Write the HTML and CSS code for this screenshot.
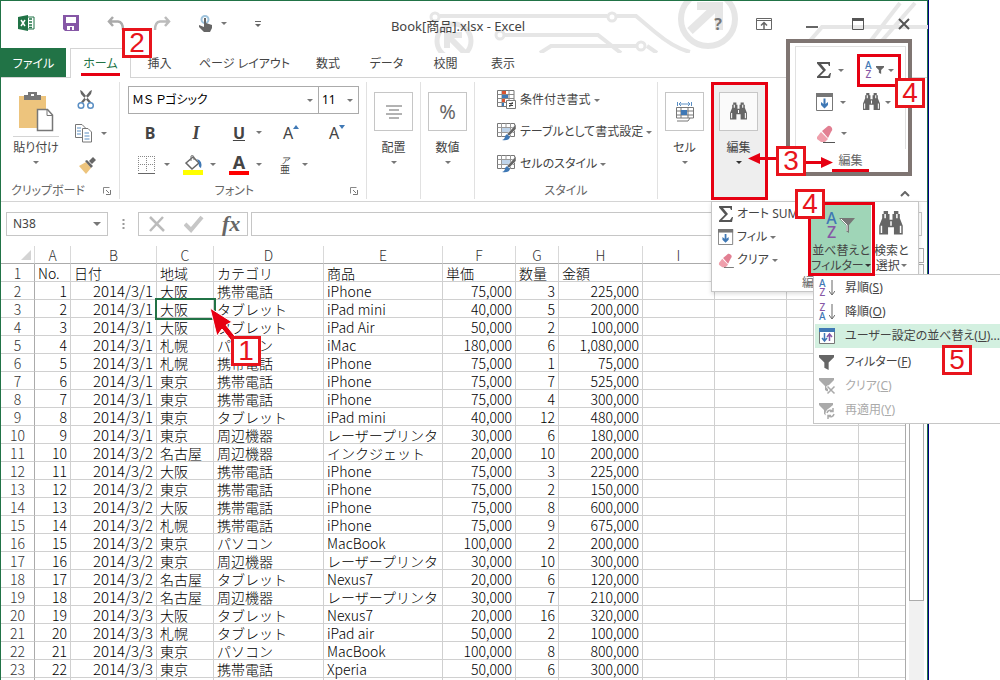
FILE: index.html
```html
<!DOCTYPE html>
<html lang="ja">
<head>
<meta charset="utf-8">
<title>Book[商品].xlsx - Excel</title>
<link rel="stylesheet" href="styles.css">
</head>
<body>
<svg class="defs" aria-hidden="true">
  <symbol id="sigma" viewBox="0 0 16 16"><path d="M1 0H14V4H13L12 2H5L10 8L4 14H12L14 11H15L14 16H1V14.500L7 8.500L1 1.500Z" fill="#555"/></symbol>
  <symbol id="fill" viewBox="0 0 18 18"><path d="M.5.5H16.500V17.500H.5Z" fill="#fff" stroke="#777"/><path d="M0 0H17V4H0Z" fill="#777"/><path d="M7.500 5.500H9.500V11L12 9V12L8.500 15.500L5 12V9L7.500 11Z" fill="#3f78b5"/></symbol>
  <symbol id="binoc" viewBox="0 0 18 17"><path d="M4 0H7V2H8V6H10V2H11V0H14V2H15V5L17 10V16H11V11H7V16H1V10L3 5V2H4Z" fill="#666"/><path d="M2.500 10V15M15.500 10V15M5 2V5M13 2V5M9 7V10" stroke="#fff" stroke-width="1"/></symbol>
  <symbol id="eraser" viewBox="0 0 19 18"><path d="M1 12L5 7L12 14L9 17H5L1 14Z" fill="#ef9fac"/><path d="M6 6L12 1Q14 0 16 3Q17 5 15 7L12 13Z" fill="#e27f92"/><path d="M7 17.500H19" stroke="#555"/></symbol>
  <symbol id="scissors" viewBox="0 0 18 20"><path d="M3 0L4 4L12 13L14 12L5 1ZM15 0L14 4L6 13L4 12L13 1Z" fill="#666"/><circle cx="4" cy="15.500" r="2.800" fill="none" stroke="#5b8fc4" stroke-width="1.500"/><circle cx="13.500" cy="15.500" r="2.800" fill="none" stroke="#5b8fc4" stroke-width="1.500"/></symbol>
  <symbol id="funnel" viewBox="0 0 14 14"><path d="M0 0H14V2L9 7V14L5 12V7L0 2Z" fill="currentColor"/></symbol>
  <symbol id="tablebrush" viewBox="0 0 20 20"><path d="M.5 1.500H17.500V14.500H.5Z" fill="#fff" stroke="#777"/><path d="M5 5.500H13V11H5Z" fill="#bfd4ea"/><path d="M.5 5.500H17.500M.5 10.500H17.500M4.500 1V15M9 1V5M13.500 1V15" stroke="#999"/><path d="M19 2L19 7L12 14L10 12Z" fill="#666" stroke="#fff" stroke-width=".5"/><path d="M10 12L13 15Q12 19 5 18Q8 17 8 14Z" fill="#3f78b5"/></symbol>
  <symbol id="launcher" viewBox="0 0 8 8"><path d="M.5 6.500V.5H6.500" fill="none" stroke="#888"/><path d="M3 3L6 6M7.500 3V7.500H3" fill="none" stroke="#777"/></symbol>
</svg>
<div class="screen">
<main class="app">
  <header class="titlebar">
    <svg class="circuit" width="500" height="52" viewBox="0 0 500 52" fill="none" stroke="#e6e6e6" stroke-width="4">
      <circle cx="7" cy="16" r="4" stroke-width="3"/><path d="M12 15H179M189 15H208L227 31Q246 47 262 51"/><circle cx="184" cy="16" r="4" stroke-width="3"/>
      <circle cx="26" cy="40" r="17" stroke-width="5"/><path d="M36 51L21 36M19 47V34H34" stroke-width="6"/>
      <circle cx="72" cy="34" r="4" stroke-width="3"/><path d="M77 34H170L193 52M112 52L123 45H208M219 45L229 52"/><circle cx="213" cy="45" r="4" stroke-width="3"/>
      <circle cx="280" cy="18" r="27" stroke-width="6"/><path d="M262 30L290 4M269 5H291V29" stroke-width="8"/>
      <path d="M380 42L394 26H500M441 42L472 2M452 42L487 2"/>
    </svg>
    <div class="quick">
      <svg width="17" height="17" viewBox="0 0 17 17"><path d="M7 2H16V14H7Z" fill="#fff" stroke="#217346"/><path d="M11 4H14M11 7H14M11 10H14M11 12.500H14" stroke="#217346" stroke-width="1.500"/><path d="M0 2L10 0V16L0 14Z" fill="#217346"/><path d="M3 5L7 11M7 5L3 11" stroke="#fff" stroke-width="1.500"/></svg>
      <button class="icon" aria-label="上書き保存"><svg width="16" height="17" viewBox="0 0 16 17"><path d="M0 0H16V16H2L0 14Z" fill="#8657a6"/><path d="M3 2H13V8H3ZM4 11H11V15H9V12H7V15H4Z" fill="#fff"/></svg></button>
      <button class="icon" aria-label="元に戻す"><svg width="18" height="15" viewBox="0 0 18 15"><path d="M6 1L2 5.500L6 10M2 5.500H11Q16 6 16 14" fill="none" stroke="#aaa" stroke-width="2.500"/></svg></button>
      <button class="icon" aria-label="やり直し"><svg width="18" height="15" viewBox="0 0 18 15"><path d="M12 1L16 5.500L12 10M16 5.500H7Q2 6 2 14" fill="none" stroke="#bbb" stroke-width="2.500"/></svg></button>
      <button class="icon touch" aria-label="タッチモード"><svg width="14" height="17" viewBox="0 0 14 17"><circle cx="6" cy="4.500" r="3.500" fill="none" stroke="#9fc3dc" stroke-width="2"/><path d="M5 3H7V8L13 10V13L11 17H5L0 12V10L5 12Z" fill="#666"/></svg><i class="caret"></i></button>
      <button class="icon" aria-label="カスタマイズ"><svg width="6" height="6" viewBox="0 0 6 6"><path d="M0 .5H6" stroke="#666"/><path d="M0 3H6L3 6Z" fill="#666"/></svg></button>
    </div>
    <h1 class="title">Book[商品].xlsx - Excel</h1>
    <div class="winbuttons">
      <button class="icon help" aria-label="ヘルプ">?</button>
      <button class="icon" aria-label="リボンの表示"><svg width="16" height="12" viewBox="0 0 16 12"><path d="M.5.5H15.500V11.500H.5ZM0 2.500H16" fill="none" stroke="#666"/><path d="M8 11V5M5 7.500L8 4.500L11 7.500" fill="none" stroke="#666" stroke-width="1.500"/></svg></button>
      <button class="icon" aria-label="最小化"><svg width="12" height="12" viewBox="0 0 12 12"><path d="M0 9H12" stroke="#666" stroke-width="2"/></svg></button>
      <button class="icon" aria-label="最大化"><svg width="12" height="12" viewBox="0 0 12 12"><path d="M.5.5H11.500V11.500H.5Z" fill="none" stroke="#555"/><path d="M0 1.500H12" stroke="#555" stroke-width="3"/></svg></button>
      <button class="icon" aria-label="閉じる"><svg width="12" height="12" viewBox="0 0 12 12"><path d="M1 1L11 11M11 1L1 11" stroke="#555" stroke-width="2"/></svg></button>
    </div>
  </header>

  <nav class="tabs">
    <button class="tab file">ファイル</button>
    <button class="tab home"><span>ホーム</span></button>
    <button class="tab">挿入</button>
    <button class="tab">ページ レイアウト</button>
    <button class="tab">数式</button>
    <button class="tab">データ</button>
    <button class="tab">校閲</button>
    <button class="tab">表示</button>
  </nav>

  <section class="ribbon">
    <div class="group clipboard">
      <div class="body">
        <button class="paste">
          <svg width="38" height="40" viewBox="0 0 38 40"><path d="M1 4H28V36H1Z" fill="#edc47d"/><path d="M6 3H10V0H19V3H23V8H6Z" fill="#777"/><path d="M13 2H16V4H13Z" fill="#fff"/><path d="M19.500 17.500H29.500L34.500 23V38.500H19.500Z" fill="#fff" stroke="#777" stroke-width="1.500"/><path d="M29 18V23.500H34.500" fill="none" stroke="#777"/></svg>
          <span>貼り付け</span><i class="caret"></i>
        </button>
        <div class="clipcol">
          <button class="icon" aria-label="切り取り"><svg width="18" height="20"><use href="#scissors"/></svg></button>
          <button class="icon" aria-label="コピー"><svg width="18" height="19" viewBox="0 0 18 19"><path d="M.5.5H7L10.500 4V13.500H.5Z" fill="#fff" stroke="#777"/><path d="M7.500 4.500H13L16.500 8V18H7.500Z" fill="#fff" stroke="#777"/><path d="M2 4H6M2 7H6M2 10H6M9.500 9H14M9.500 12H14.500M9.500 15H14.500" stroke="#5b8fc4"/></svg><i class="caret"></i></button>
          <button class="icon" aria-label="書式のコピー"><svg width="18" height="18" viewBox="0 0 18 18"><path d="M1 9L8 5L13 11L8 17Z" fill="#edc47d"/><path d="M7 4L9 3L15 9L13 11ZM11 4L15 0L18 3L14 7Z" fill="#666"/></svg></button>
        </div>
      </div>
      <footer><span>クリップボード</span><svg width="8" height="8"><use href="#launcher"/></svg></footer>
    </div>

    <div class="group font">
      <div class="combos">
        <label class="combo wide"><select aria-label="フォント"><option>ＭＳ Ｐゴシック</option></select><i class="caret"></i></label>
        <label class="combo"><select aria-label="サイズ"><option>11</option></select><i class="caret"></i></label>
      </div>
      <div class="tools">
        <button class="tool"><b>B</b></button>
        <button class="tool"><b><em>I</em></b></button>
        <button class="tool"><b class="underlined">U</b><i class="caret"></i></button>
        <button class="tool" aria-label="拡大"><span class="ascale">A<svg width="6" height="4" viewBox="0 0 6 4"><path d="M0 4L3 0L6 4Z" fill="#3f78b5"/></svg></span></button>
        <button class="tool" aria-label="縮小"><span class="ascale">A<svg width="6" height="4" viewBox="0 0 6 4"><path d="M0 0L3 4L6 0Z" fill="#3f78b5"/></svg></span></button>
        <button class="tool start" aria-label="罫線"><svg width="20" height="20" viewBox="0 0 20 20"><path d="M1.500 1V17M9.500 1V17M17.500 1V17M1 1.500H18M1 9.500H18" stroke="#888" stroke-dasharray="1 1"/><path d="M1 18.500H18" stroke="#666"/></svg><i class="caret"></i></button>
        <button class="tool" aria-label="塗りつぶし"><svg width="20" height="20" viewBox="0 0 20 20"><path d="M3 8L10 2L16 8L9 14Z" fill="#fff" stroke="#666" stroke-width="1.500"/><path d="M8 6V1Q10-1 11 2V5" fill="none" stroke="#777"/><path d="M14 4Q20 6 18 13Q15 12 16 8Z" fill="#3f78b5"/><path d="M0 15H20V20H0Z" fill="#ff0"/></svg><i class="caret"></i></button>
        <button class="tool" aria-label="文字色"><span class="fontcolor">A</span><i class="caret"></i></button>
        <button class="tool" aria-label="ふりがな"><span class="ruby"><em>ア</em>亜</span><i class="caret"></i></button>
      </div>
      <footer><span>フォント</span><svg width="8" height="8"><use href="#launcher"/></svg></footer>
    </div>

    <div class="group narrow"><button class="big"><span class="tile"><svg width="18" height="14" viewBox="0 0 18 14"><path d="M1 1H17M4 5H14M1 9H17M4 13H14" stroke="#666"/></svg></span>配置<i class="caret"></i></button></div>
    <div class="group narrow"><button class="big"><span class="tile percent">%</span>数値<i class="caret"></i></button></div>

    <div class="group styles">
      <div class="stylelist">
        <button><svg width="20" height="20" viewBox="0 0 20 20"><path d="M.5.500H17V16.500H.5Z" fill="#fff" stroke="#777"/><path d="M.5 4.500H17M.5 8.500H17M.5 12.500H17M5 0V16M12 0V10" stroke="#888"/><path d="M5 1H9V4H5ZM5 9H8V12H5Z" fill="#d9532f"/><path d="M5 5H11V8H5ZM5 13H7V16H5Z" fill="#3f78b5"/><path d="M9.500 10.500H18.500V18.500H9.500Z" fill="#fff" stroke="#777"/><path d="M12 13.500H16M12 15.500H16M15.500 12L12.500 17" stroke="#444"/></svg>条件付き書式<i class="caret"></i></button>
        <button><svg width="20" height="20"><use href="#tablebrush"/></svg>テーブルとして書式設定<i class="caret"></i></button>
        <button><svg width="20" height="20"><use href="#tablebrush"/></svg>セルのスタイル<i class="caret"></i></button>
      </div>
      <footer><span>スタイル</span></footer>
    </div>

    <div class="group cells"><button class="big"><span class="tile"><svg width="18" height="20" viewBox="0 0 18 20"><path d="M1.500 0V4M15.500 0V4M3 2H14M5 0L3 2L5 4M12 0L14 2L12 4" stroke="#5b8fc4" fill="none"/><path d="M.5 5.500H17.500V16H.5ZM.5 9H17.500M.5 13H17.500M5 5V16M12 5V16M1 19H12L14 16" fill="none" stroke="#777"/><path d="M5 8H11V13H5Z" fill="#3f78b5"/></svg></span>セル<i class="caret"></i></button></div>
    <div class="group edit"><button class="big"><span class="tile"><svg width="19" height="19"><use href="#binoc"/></svg></span>編集<i class="caret dark"></i></button></div>
    <button class="collapse icon" aria-label="リボンを折りたたむ"><svg width="10" height="6" viewBox="0 0 10 6"><path d="M1 5L5 1L9 5" fill="none" stroke="#666" stroke-width="2"/></svg></button>
  </section>

  <section class="formula">
    <label class="namebox"><input aria-label="名前ボックス" value="N38"><i class="caret"></i></label>
    <svg class="dots" width="3" height="12" viewBox="0 0 3 12"><path d="M1.500 1V12" stroke="#999" stroke-width="2" stroke-dasharray="2 2"/></svg>
    <div class="fxbox">
      <svg width="18" height="18" viewBox="0 0 18 18"><path d="M2 2L16 16M15 2L2 16" stroke="#bbb" stroke-width="2.500"/></svg>
      <svg width="20" height="18" viewBox="0 0 20 18"><path d="M1 9L7 15L18 2" fill="none" stroke="#c6c6c6" stroke-width="4"/></svg>
      <span class="fx">fx</span>
    </div>
    <input class="formulainput" aria-label="数式バー">
  </section>

  <section class="sheet">
    <table>
      <colgroup><col class="c0"><col class="ca"><col class="cb"><col class="cc"><col class="cd"><col class="ce"><col class="cf"><col class="cg"><col class="ch"><col class="ci"><col class="ci"><col class="ci"><col></colgroup>
      <thead><tr><th class="corner"><svg width="10" height="10" viewBox="0 0 10 10"><path d="M10 0V10H0Z" fill="#d4d4d4"/></svg><th>A<th>B<th>C<th>D<th>E<th>F<th>G<th>H<th>I<th><th><th></tr></thead>
      <tbody>
      <tr class="names"><th>1<td>No.<td>日付<td>地域<td>カテゴリ<td>商品<td>単価<td>数量<td>金額<td><td><td><td></tr>
      <tr><th>2<td>1<td>2014/3/1<td>大阪<td>携帯電話<td>iPhone<td>75,000<td>3<td>225,000<td><td><td><td></tr>
      <tr><th>3<td>2<td>2014/3/1<td class="active">大阪<td>タブレット<td>iPad mini<td>40,000<td>5<td>200,000<td><td><td><td></tr>
      <tr><th>4<td>3<td>2014/3/1<td>大阪<td>タブレット<td>iPad Air<td>50,000<td>2<td>100,000<td><td><td><td></tr>
      <tr><th>5<td>4<td>2014/3/1<td>札幌<td>パソコン<td>iMac<td>180,000<td>6<td>1,080,000<td><td><td><td></tr>
      <tr><th>6<td>5<td>2014/3/1<td>札幌<td>携帯電話<td>iPhone<td>75,000<td>1<td>75,000<td><td><td><td></tr>
      <tr><th>7<td>6<td>2014/3/1<td>東京<td>携帯電話<td>iPhone<td>75,000<td>7<td>525,000<td><td><td><td></tr>
      <tr><th>8<td>7<td>2014/3/1<td>東京<td>携帯電話<td>iPhone<td>75,000<td>4<td>300,000<td><td><td><td></tr>
      <tr><th>9<td>8<td>2014/3/1<td>東京<td>タブレット<td>iPad mini<td>40,000<td>12<td>480,000<td><td><td><td></tr>
      <tr><th>10<td>9<td>2014/3/1<td>東京<td>周辺機器<td>レーザープリンタ<td>30,000<td>6<td>180,000<td><td><td><td></tr>
      <tr><th>11<td>10<td>2014/3/2<td>名古屋<td>周辺機器<td>インクジェット<td>20,000<td>10<td>200,000<td><td><td><td></tr>
      <tr><th>12<td>11<td>2014/3/2<td>大阪<td>携帯電話<td>iPhone<td>75,000<td>3<td>225,000<td><td><td><td></tr>
      <tr><th>13<td>12<td>2014/3/2<td>東京<td>携帯電話<td>iPhone<td>75,000<td>2<td>150,000<td><td><td><td></tr>
      <tr><th>14<td>13<td>2014/3/2<td>大阪<td>携帯電話<td>iPhone<td>75,000<td>8<td>600,000<td><td><td><td></tr>
      <tr><th>15<td>14<td>2014/3/2<td>札幌<td>携帯電話<td>iPhone<td>75,000<td>9<td>675,000<td><td><td><td></tr>
      <tr><th>16<td>15<td>2014/3/2<td>東京<td>パソコン<td>MacBook<td>100,000<td>2<td>200,000<td><td><td><td></tr>
      <tr><th>17<td>16<td>2014/3/2<td>東京<td>周辺機器<td>レーザープリンタ<td>30,000<td>10<td>300,000<td><td><td><td></tr>
      <tr><th>18<td>17<td>2014/3/2<td>名古屋<td>タブレット<td>Nexus7<td>20,000<td>6<td>120,000<td><td><td><td></tr>
      <tr><th>19<td>18<td>2014/3/2<td>名古屋<td>周辺機器<td>レーザープリンタ<td>30,000<td>7<td>210,000<td><td><td><td></tr>
      <tr><th>20<td>19<td>2014/3/3<td>大阪<td>タブレット<td>Nexus7<td>20,000<td>16<td>320,000<td><td><td><td></tr>
      <tr><th>21<td>20<td>2014/3/3<td>札幌<td>タブレット<td>iPad air<td>50,000<td>2<td>100,000<td><td><td><td></tr>
      <tr><th>22<td>21<td>2014/3/3<td>東京<td>パソコン<td>MacBook<td>100,000<td>8<td>800,000<td><td><td><td></tr>
      <tr><th>23<td>22<td>2014/3/3<td>東京<td>携帯電話<td>Xperia<td>50,000<td>6<td>300,000<td><td><td><td></tr>
      <tr><th><td><td><td><td><td><td><td><td><td><td><td></tr>
      </tbody>
    </table>
    <div class="scrollbar"><div class="up"></div><div class="thumb"></div><div class="track"></div></div>
  </section>
</main>

<aside class="inset">
  <div class="insetgrid">
    <button class="icon"><svg width="16" height="16"><use href="#sigma"/></svg><i class="caret"></i></button>
    <button class="icon azbox"><span class="az"><b>A</b><b>Z</b></span><svg class="gray" width="8" height="8"><use href="#funnel"/></svg><i class="caret"></i></button>
    <button class="icon"><svg width="18" height="18"><use href="#fill"/></svg><i class="caret"></i></button>
    <button class="icon"><svg width="19" height="18"><use href="#binoc"/></svg><i class="caret"></i></button>
    <button class="icon"><svg width="19" height="18"><use href="#eraser"/></svg><i class="caret"></i></button>
  </div>
  <footer><span>編集</span></footer>
</aside>

<section class="popup">
  <div class="popuplist">
    <button><svg width="16" height="16"><use href="#sigma"/></svg>オート SUM</button>
    <button><svg width="16" height="16"><use href="#fill"/></svg>フィル<i class="caret"></i></button>
    <button><svg width="16" height="15"><use href="#eraser"/></svg>クリア<i class="caret"></i></button>
  </div>
  <button class="sortbtn"><span class="sorticon"><span class="az"><b>A</b><b>Z</b></span><svg width="18" height="18" viewBox="0 0 18 18"><path d="M1 2H17L11 9V17L8 15V9Z" fill="#777"/><path d="M3 3L9 9V15" fill="none" stroke="#fff"/></svg></span><span>並べ替えと</span><span>フィルター<i class="caret dark"></i></span></button>
  <button class="findbtn"><svg width="28" height="25"><use href="#binoc"/></svg><span>検索と</span><span>選択<i class="caret"></i></span></button>
  <span class="popuplabel">編</span>
</section>

<div class="menu" role="menu">
  <button role="menuitem"><span class="az"><b>A</b><b>Z</b></span><svg width="6" height="16" viewBox="0 0 6 16"><path d="M3 0V14M0 11L3 15L6 11" fill="none" stroke="#666"/></svg><span class="label">昇順(<u>S</u>)</span></button>
  <button role="menuitem"><span class="az za"><b>Z</b><b>A</b></span><svg width="6" height="16" viewBox="0 0 6 16"><path d="M3 0V14M0 11L3 15L6 11" fill="none" stroke="#666"/></svg><span class="label">降順(<u>O</u>)</span></button>
  <button role="menuitem" class="hot"><svg width="16" height="16" viewBox="0 0 16 16"><path d="M.5.500H15.500V15.500H.5Z" fill="#fff" stroke="#777"/><path d="M0 0H16V4H0Z" fill="#3f78b5"/><path d="M5.500 5V13M3 10L5.500 13L8 10" fill="none" stroke="#3f78b5" stroke-width="1.500"/><path d="M10.500 13V6M8 9L10.500 6L13 9" fill="none" stroke="#8657a6" stroke-width="1.500"/></svg><span class="label">ユーザー設定の並べ替え(<u>U</u>)...</span></button>
  <button role="menuitem"><svg class="gray" width="15" height="15"><use href="#funnel"/></svg><span class="label">フィルター(<u>F</u>)</span></button>
  <button role="menuitem" disabled><svg width="17" height="17" viewBox="0 0 17 17"><path d="M0 0H15V2L9 8V14L6 12V8L0 2Z" fill="#aaa"/><path d="M8 8L16 16M16 8L8 16" stroke="#fff" stroke-width="3"/><path d="M8.500 8.500L15.500 15.500M15.500 8.500L8.500 15.500" stroke="#aaa" stroke-width="1.500"/></svg><span class="label">クリア(<u>C</u>)</span></button>
  <button role="menuitem" disabled><svg width="17" height="17" viewBox="0 0 17 17"><path d="M0 1H14V3L8 8V14L5 12V8L0 3Z" fill="#aaa"/><circle cx="11.500" cy="11.500" r="5" fill="#fff"/><path d="M8 11Q9 7 14 9M15 12Q14 16 9 14M14 6V9.500H11M9 17V13.500H12" fill="none" stroke="#aaa" stroke-width="1.500"/></svg><span class="label">再適用(<u>Y</u>)</span></button>
</div>

<div class="ring ring-edit"></div>
<div class="ring ring-sort"></div>
<svg class="arrow arrow-1" width="34" height="40" viewBox="0 0 34 40"><path d="M2 1L24 15L18 18L30 33L25 36L14 22L9 29Z" fill="#e60012" stroke="#fff"/></svg>
<svg class="arrow arrow-3" width="86" height="16" viewBox="0 0 86 16"><path d="M0 5.500L12 0V4H28V7H12V11ZM85 9.500L73 4V8H56V11H73V15Z" fill="#e60012"/></svg>
<span class="badge b1">1</span>
<span class="badge b2">2</span>
<span class="badge b3">3</span>
<span class="badge b4">4</span>
<span class="badge b4b">4</span>
<span class="badge b5">5</span>
</div>
</body>
</html>
```

FILE: styles.css
```css
* { box-sizing: border-box; }
body {
  margin: 0;
  background: #fff;
  color: #444;
  font: 12px/16px "Noto Sans", "Noto Sans CJK JP", sans-serif;
  font-feature-settings: "palt";
}
button, input, select {
  font: inherit;
  font-feature-settings: inherit;
  color: inherit;
  background: none;
  border: 0;
  padding: 0;
  margin: 0;
}
svg { flex: none; display: block; }
footer { display: flex; align-items: center; color: #666; }
.defs { position: absolute; width: 0; height: 0; }
.screen { position: relative; height: 100vh; overflow: hidden; padding-right: 72px; }
.app {
  min-height: 100vh;
  border: 1px solid #217346;
  border-bottom: 0;
  box-shadow: 1px 0 #000080;
}
.icon { display: flex; align-items: center; }
.caret {
  flex: none;
  display: inline-block;
  border: 3px solid transparent;
  border-top-color: #777;
  border-bottom: 0;
}
.caret.dark { border-top-color: #333; }
.gray { color: #666; }

.titlebar {
  position: relative;
  height: 47px;
  display: flex;
  align-items: center;
  justify-content: space-between;
  padding: 0 17px;
}
.circuit { position: absolute; left: 427px; top: 0; }
.quick { display: flex; align-items: center; gap: 28px; width: 308px; padding-bottom: 2px; }
.touch { gap: 8px; }
.title { position: relative; margin: 0; padding-top: 3px; font-size: 13px; font-weight: 400; }
.winbuttons { position: relative; display: flex; align-items: center; gap: 34px; width: 320px; justify-content: flex-end; padding-bottom: 2px; }
.help { font-size: 16px; font-weight: 700; color: #777; }

.tabs {
  display: grid;
  grid-template-columns: 65px 65px 57px 113px 54px 63px 55px 60px;
  height: 30px;
  border-bottom: 1px solid #d4d4d4;
}
.tab { height: 29px; padding-top: 2px; }
.file { background: #217346; color: #fff; }
.home {
  height: 30px;
  margin-left: 4px;
  padding: 0;
  background: #fff;
  border: 1px solid #d4d4d4;
  border-bottom: 0;
  color: #217346;
}
.home span { display: block; margin: 0 10px; border-bottom: 3px solid #e60012; padding: 4px 0 1px; }

.ribbon { display: flex; height: 124px; padding: 4px 0 2px; border-bottom: 1px solid #d4d4d4; }
.group { display: flex; flex-direction: column; justify-content: space-between; border-right: 1px solid #e1e1e1; }
.group footer { height: 16px; justify-content: center; }
.clipboard { width: 119px; }
.clipboard footer { justify-content: flex-end; gap: 18px; padding-right: 8px; }
.body { display: flex; gap: 18px; padding-left: 14px; }
.paste { display: flex; flex-direction: column; align-items: center; width: 42px; padding-top: 10px; }
.paste svg { margin-left: 2px; }
.paste span { border-top: 1px solid #d4d4d4; margin-top: 4px; padding: 3px 0 5px; white-space: nowrap; }
.clipcol { display: flex; flex-direction: column; gap: 13px; padding-top: 8px; }
.clipcol .icon { height: 20px; gap: 8px; }
.clipcol .icon:first-child { margin-left: 2px; }
.clipcol .icon:last-child { margin-left: 3px; }
.font { width: 247px; padding-left: 8px; }
.combos { display: flex; margin-top: 4px; color: #000; }
.combo {
  display: flex;
  align-items: center;
  width: 41px;
  height: 28px;
  padding: 0 5px 0 3px;
  border: 1px solid #ababab;
}
.combo.wide { width: 190px; border-right: 0; }
.combo select { flex: 1; min-width: 0; appearance: none; }
.tools { display: grid; grid-template-columns: repeat(5, 46px); grid-auto-rows: 32px; }
.tool { display: flex; align-items: center; justify-content: flex-end; gap: 7px; width: 42px; font-size: 16px; }
.tool:nth-child(1), .tool:nth-child(2) { justify-content: center; padding-left: 2px; }
.tool:nth-child(3) { gap: 11px; }
.tool:nth-child(4), .tool:nth-child(5) { justify-content: center; padding-left: 8px; }
.tool em { font-family: "Liberation Serif", serif; font-size: 18px; }
.underlined { text-decoration: underline; }
.ascale { display: flex; align-items: flex-start; }
.fontcolor { width: 20px; line-height: 17px; border-bottom: 4px solid #f00; font-weight: 700; font-size: 18px; text-align: center; }
.ruby { display: flex; flex-direction: column; font-size: 10px; line-height: 9px; padding-right: 5px; }
.ruby em { font: italic 9px/9px "Noto Sans CJK JP", sans-serif; }
.font footer { justify-content: flex-end; gap: 96px; padding-right: 8px; }
.narrow { width: 54px; }
.big { display: flex; flex-direction: column; align-items: center; width: 53px; padding-top: 10px; }
.big .caret { margin-top: 5px; }
.tile {
  display: flex;
  align-items: center;
  justify-content: center;
  width: 39px;
  height: 39px;
  margin-bottom: 9px;
  border: 1px solid #c6c6c6;
  background: #fff;
}
.percent { font-size: 20px; color: #666; }
.styles { width: 183px; padding-left: 22px; }
.stylelist { display: flex; flex-direction: column; gap: 12px; padding-top: 8px; }
.stylelist button { display: flex; align-items: center; gap: 3px; white-space: nowrap; }
.styles footer { padding-right: 22px; }
.cells { width: 54px; border: 0; }
.edit { width: 55px; border: 0; background: #eee; }
.edit .tile { background: #fafafa; }
.collapse { margin: auto 17px 0 auto; padding-bottom: 2px; }

.formula { display: flex; align-items: center; margin: 10px 5px 0; height: 24px; }
.namebox { display: flex; align-items: center; width: 102px; height: 24px; border: 1px solid #c6c6c6; padding: 0 6px; }
.namebox input { flex: 1; min-width: 0; }
.namebox .caret { border-width: 4px 4px 0; }
.dots { margin: 0 13px 0 14px; }
.fxbox { display: flex; align-items: center; gap: 18px; height: 24px; width: 110px; padding: 0 9px; border: 1px solid #c6c6c6; }
.fx { font: italic 700 22px/20px "Liberation Serif", serif; color: #666; }
.formulainput { flex: 1; min-width: 0; height: 24px; margin-left: 3px; border: 1px solid #c6c6c6; }

.sheet { display: flex; margin-top: 10px; padding-right: 3px; }
table {
  flex: 1;
  width: 0;
  table-layout: fixed;
  border-collapse: separate;
  border-spacing: 0;
  border-right: 1px solid #ababab;
  font: 300 14px/16px "Noto Sans CJK JP", sans-serif;
  color: #000;
}
.c0 { width: 34px; }
.ca { width: 36px; }
.cb { width: 86px; }
.cc { width: 57px; }
.cd { width: 110px; }
.ce { width: 119px; }
.cf { width: 73px; }
.cg { width: 43px; }
.ch { width: 84px; }
.ci { width: 72px; }
th, td {
  height: 18px;
  padding: 1px 3px 0;
  border-right: 1px solid #d0d0d0;
  border-bottom: 1px solid #d0d0d0;
  white-space: nowrap;
  text-align: right;
}
th { font-weight: 300; text-align: center; color: #333; }
thead th { border-bottom-color: #ababab; border-right-color: #d9d9d9; }
tbody th { border-right-color: #ababab; }
th:last-child, td:last-child { border-right: 0; }
.corner svg { margin-left: auto; }
td:nth-child(3) { font-size: 15px; }
td:nth-child(4), td:nth-child(5), td:nth-child(6), .names td { text-align: left; }
.names td { font-size: 14px; }
.active { outline: 2px solid #217346; }
.scrollbar { display: flex; flex-direction: column; width: 15px; margin-left: 3px; padding-top: 2px; }
.up { height: 15px; border: 1px solid #ababab; }
.thumb { height: 337px; border: 1px solid #ababab; margin-top: 1px; }
.track { flex: 1; background: #f1f1f1; }

.inset {
  position: absolute;
  left: 786px;
  top: 39px;
  width: 126px;
  height: 137px;
  border: 4px solid #7f7572;
  background: #fff;
  padding: 3px 2px 0 5px;
}
.insetgrid {
  display: grid;
  grid-template-columns: 46px 48px;
  grid-template-rows: 32px 32px 31px;
  align-items: center;
  padding: 7px 0 0 20px;
  border: 1px solid #e1e1e1;
  border-width: 1px 1px 0;
}
.insetgrid .icon { gap: 6px; }
.insetgrid .icon:nth-child(even) { gap: 4px; }
.insetgrid .azbox { border: 3px solid #e60012; height: 33px; width: 44px; margin-left: -5px; padding-left: 5px; }
.az { display: flex; flex-direction: column; font-size: 10px; line-height: 9px; color: #3f78b5; }
.az b { font-weight: 500; }
.az b:last-child { color: #8657a6; }
.inset footer { justify-content: center; padding-top: 3px; }
.inset footer span { padding: 0 6px; border-bottom: 3px solid #e60012; line-height: 17px; }

.popup {
  position: absolute;
  left: 711px;
  top: 201px;
  width: 208px;
  height: 91px;
  display: flex;
  background: #fff;
  border: 1px solid #c6c6c6;
  box-shadow: 0 2px 4px #0002;
}
.popuplist { display: flex; flex-direction: column; gap: 7px; width: 99px; padding: 4px 0 0 6px; }
.popuplist button { display: flex; align-items: center; gap: 3px; white-space: nowrap; }
.sortbtn, .findbtn { display: flex; flex-direction: column; align-items: center; line-height: 15px; white-space: nowrap; }
.sortbtn { width: 60px; height: 71px; background: #9fd5b7; padding-top: 8px; }
.sorticon { display: flex; align-items: center; gap: 1px; margin-bottom: 3px; height: 30px; }
.sorticon .az { font-size: 16px; line-height: 14px; }
.sortbtn .caret, .findbtn .caret { margin: 0 0 3px 1px; }
.findbtn { padding: 9px 0 0 3px; }
.findbtn svg { margin-bottom: 7px; }
.popuplabel { position: absolute; left: 90px; bottom: 0; color: #666; }
.menu {
  position: absolute;
  left: 813px;
  right: 0;
  top: 274px;
  padding: 1px 0 1px 1px;
  background: #fff;
  border: 1px solid #c6c6c6;
  border-right: 0;
}
.menu button { display: flex; align-items: center; width: 100%; height: 24px; padding-left: 4px; white-space: nowrap; }
.menu button > svg { margin-right: 4px; }
.menu .label { margin-left: auto; width: 155px; text-align: left; }
.menu .hot { background: #d3f0e0; }
.menu .hot + button { margin-top: 2px; }
.menu button:disabled { color: #aaa; }
.menu .za { color: #8657a6; }
.menu .za b:last-child { color: #3f78b5; }
.menu .az + svg { margin-left: 3px; }

.ring { position: absolute; border: 3px solid #e60012; }
.ring-edit { left: 711px; top: 82px; width: 57px; height: 118px; }
.ring-sort { left: 808px; top: 202px; width: 67px; height: 74px; }
.arrow { position: absolute; }
.arrow-1 { left: 208px; top: 307px; }
.arrow-3 { left: 748px; top: 153px; }
.badge {
  position: absolute;
  width: 30px;
  height: 30px;
  border: 3px solid #e8141c;
  background: #fff;
  color: #e8141c;
  font: 28px/24px "Liberation Sans", sans-serif;
  text-align: center;
}
.b1 { left: 231px; top: 336px; }
.b2 { left: 122px; top: 28px; }
.b3 { left: 776px; top: 146px; }
.b4 { left: 895px; top: 78px; }
.b4b { left: 795px; top: 189px; }
.b5 { left: 942px; top: 345px; }
```
